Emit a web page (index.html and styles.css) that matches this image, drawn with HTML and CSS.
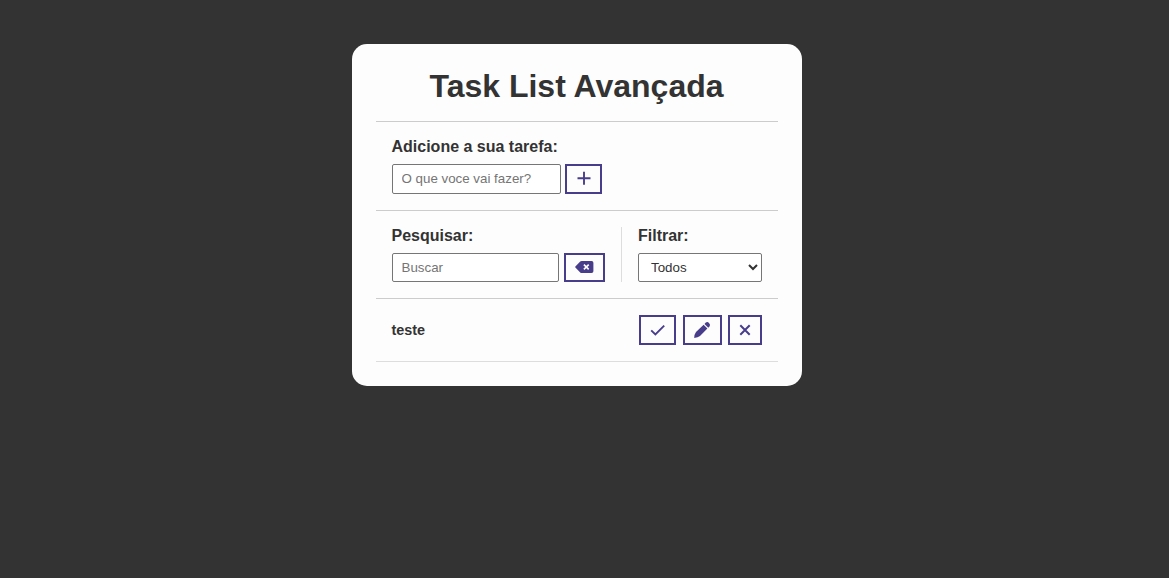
FILE: index.html
```html
<!DOCTYPE html>
<html lang="pt-BR">
<head>
<meta charset="utf-8">
<title>Task List Avançada</title>
<link rel="stylesheet" href="styles.css">
</head>
<body>
<main class="card">
  <header class="card-header"><h1>Task List Avançada</h1></header>
  <form class="section add-form">
    <label class="label" for="new-task">Adicione a sua tarefa:</label>
    <div class="row">
      <input class="input input-add" id="new-task" type="text" placeholder="O que voce vai fazer?">
      <button class="btn btn-add" type="button" aria-label="Adicionar"><svg class="icon" width="16" height="16" viewBox="0 0 16 16"><path class="stroke" d="M9 .8v13M2.5 7.3h13" stroke-width="1.9"/></svg></button>
    </div>
  </form>
  <div class="section toolbar">
    <div class="search">
      <label class="label" for="search">Pesquisar:</label>
      <div class="row">
        <input class="input input-search" id="search" type="text" placeholder="Buscar">
        <button class="btn btn-erase" type="button" aria-label="Limpar"><svg class="icon" width="19" height="16" viewBox="0 0 19 16"><path class="fill" d="M.4 7.4 5.2 2.6Q5.8 2 6.7 2H16.6Q18.4 2 18.4 3.8V12.2Q18.4 14 16.6 14H6.7Q5.8 14 5.2 13.4L.4 8.6Q-.2 8 .4 7.4Z"/><path class="cutout" d="m8.9 5.6 4.8 4.8m0-4.8-4.8 4.8" stroke-width="1.6"/></svg></button>
      </div>
    </div>
    <div class="filter">
      <label class="label" for="filter">Filtrar:</label>
      <select class="select" id="filter"><option>Todos</option><option>Feitos</option><option>A fazer</option></select>
    </div>
  </div>
  <div class="todo">
    <h3 class="todo-title">teste</h3>
    <div class="actions">
      <button class="btn btn-done" type="button" aria-label="Concluir"><svg class="icon" width="16" height="16" viewBox="0 0 16 16"><path class="stroke" d="m2.2 8.3 4.2 4.2 8.8-8.8" stroke-width="1.9"/></svg></button>
      <button class="btn btn-edit" type="button" aria-label="Editar"><svg class="icon" width="18" height="18" viewBox="0 0 18 18"><path class="fill" d="M10.6 3.8 14.4 7.6 7 15Q5 16.6 1.2 17 1.3 13.2 3 11ZM11.5 2.9 12.8 1.6Q14.4.4 16 1.9 17.7 3.6 16.7 5.3L15.3 6.7Z"/></svg></button>
      <button class="btn btn-remove" type="button" aria-label="Remover"><svg class="icon" width="12" height="12" viewBox="0 0 12 12"><path class="stroke" d="m1.3 1.3 9.4 9.4m0-9.4-9.4 9.4" stroke-width="2"/></svg></button>
    </div>
  </div>
</main>
</body>
</html>
```
FILE: styles.css
```css
* {
  margin: 0;
  padding: 0;
  box-sizing: border-box;
  font-family: "Liberation Sans", Arial, sans-serif;
  color: #333;
}

body {
  min-height: 100vh;
  padding: 44px 16px 0 0;
  background: #333;
}

.card {
  width: 450px;
  height: 342px;
  margin: 0 auto;
  padding: 24px;
  border-radius: 15px;
  background: #fdfdfd;
}

.card-header {
  height: 54px;
  border-bottom: 1px solid #ccc;
  text-align: center;
}

h1 {
  font-size: 32px;
  line-height: 37px;
}

.section {
  padding: 16px;
  border-bottom: 1px solid #ccc;
}

.add-form {
  height: 89px;
}

.label {
  display: block;
  height: 18px;
  margin-bottom: 8px;
  font-size: 16px;
  font-weight: bold;
  line-height: 18px;
}

.row {
  display: flex;
}

.input {
  padding: 4px 9px;
  border: 1px solid #767676;
  border-radius: 2px;
  background: #fff;
  font-size: 13.333px;
}

.input::placeholder {
  color: #757575;
}

.input-add {
  width: 169px;
  height: 30px;
  margin-right: 4px;
  padding-bottom: 5px;
}

.input-search {
  width: 167px;
  height: 29px;
  margin-right: 5px;
}

.btn {
  display: flex;
  align-items: center;
  justify-content: center;
  height: 30px;
  border: 2px solid #483d8b;
  background: #fdfdfd;
}

.icon {
  display: block;
  overflow: visible;
}

.fill {
  fill: #483d8b;
}

.stroke {
  fill: none;
  stroke: #483d8b;
}

.cutout {
  fill: none;
  stroke: #fdfdfd;
}

.btn-add {
  width: 37px;
}

.btn-erase {
  width: 41px;
  height: 29px;
  padding-bottom: 1px;
}

.toolbar {
  display: flex;
  height: 88px;
}

.search {
  flex: 0 0 230.5px;
  border-right: 1px solid #ddd;
}

.filter {
  flex: 1;
  padding-left: 16px;
}

.select {
  width: 124px;
  height: 29px;
  padding: 0 8px;
  border: 1px solid #767676;
  border-radius: 2px;
  background-color: #fff;
  font-size: 13.333px;
}

.todo {
  display: flex;
  align-items: center;
  justify-content: space-between;
  height: 63px;
  padding: 16px;
  border-bottom: 1px solid #ddd;
}

.todo-title {
  font-size: 14.4px;
}

.actions {
  display: flex;
}

.btn-done {
  width: 37px;
  margin-right: 7px;
}

.btn-edit {
  width: 39px;
  margin-right: 6px;
}

.btn-remove {
  width: 34px;
}
```
